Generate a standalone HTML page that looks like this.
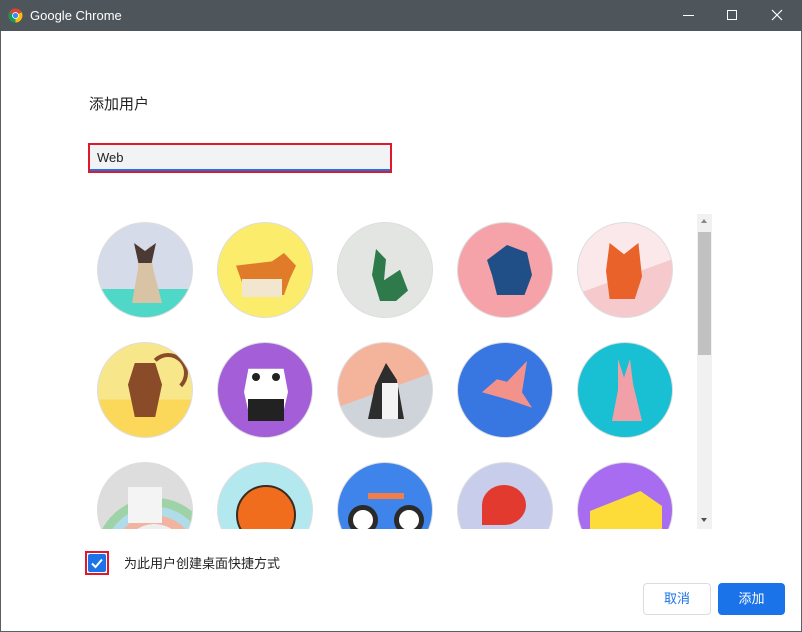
<!DOCTYPE html>
<html><head><meta charset="utf-8"><style>
*{margin:0;padding:0;box-sizing:border-box}
body{width:802px;height:632px;overflow:hidden;background:#fff;font-family:"Liberation Sans","Noto Sans CJK SC",sans-serif;position:relative}
.win{position:absolute;left:0;top:0;width:802px;height:632px;border:1px solid #5a6166;border-top:none}
.tb{position:absolute;left:0;top:0;width:802px;height:31px;background:#4e565b;color:#fff;font-size:13px}
.av{position:absolute;width:96px;height:96px;border-radius:50%;overflow:hidden;border:1px solid #ddd}
.clip{position:absolute;left:90px;top:212px;width:606px;height:317px;overflow:hidden}
</style></head><body>
<div class="win"></div>
<div class="tb">
<svg style="position:absolute;left:8px;top:8px" width="15" height="15" viewBox="0 0 16 16"><circle cx="8" cy="8" r="7.5" fill="#db4437"/><path d="M8 8 L14.5 4.5 A7.5 7.5 0 0 1 8 15.5Z" fill="#f4c20d"/><path d="M8 8 L8 15.5 A7.5 7.5 0 0 1 1.5 4.5Z" fill="#0f9d58"/><circle cx="8" cy="8" r="3.6" fill="#fff"/><circle cx="8" cy="8" r="2.8" fill="#4285f4"/></svg>
<span style="position:absolute;left:30px;top:8px">Google Chrome</span>
<div style="position:absolute;left:683px;top:15px;width:11px;height:1px;background:#fff"></div>
<div style="position:absolute;left:727px;top:10px;width:10px;height:10px;border:1px solid #fff"></div>
<svg style="position:absolute;left:771px;top:9px" width="12" height="12"><path d="M1 1L11 11M11 1L1 11" stroke="#fff" stroke-width="1.2"/></svg>
</div>
<div style="position:absolute;left:89px;top:93px;font-size:15px;color:#222">添加用户</div>
<div style="position:absolute;left:88px;top:143px;width:304px;height:30px;border:2px solid #e0182a;background:#f1f3f4"><div style="position:absolute;left:0;right:0;bottom:0;height:2px;background:#1a73e8"></div><span style="position:absolute;left:7px;top:5px;font-size:13px;color:#222">Web</span></div>

<div class="clip">
<div class="av" style="left:7px;top:10px;background:linear-gradient(#d6dbe9 70%,#4fd8c8 70%)"><div style="position:absolute;left:34px;top:22px;width:30px;height:58px;background:#d9c3a5;clip-path:polygon(20% 0,40% 20%,60% 0,70% 40%,100% 100%,0 100%,20% 40%)"></div><div style="position:absolute;left:36px;top:20px;width:22px;height:20px;background:#4a3a33;clip-path:polygon(0 0,50% 40%,100% 0,80% 100%,20% 100%)"></div></div>
<div class="av" style="left:127px;top:10px;background:#fbec6c"><div style="position:absolute;left:18px;top:30px;width:60px;height:42px;background:#e07b2a;clip-path:polygon(0 30%,60% 20%,80% 0,100% 30%,90% 60%,80% 100%,20% 100%,10% 70%)"></div><div style="position:absolute;left:24px;top:56px;width:40px;height:18px;background:#f3e6cf"></div></div>
<div class="av" style="left:247px;top:10px;background:#e3e5e3"><div style="position:absolute;left:30px;top:26px;width:40px;height:52px;background:#2f7a4a;clip-path:polygon(20% 0,45% 20%,40% 60%,80% 40%,100% 80%,70% 100%,30% 100%,10% 50%)"></div></div>
<div class="av" style="left:367px;top:10px;background:#f5a3a8"><div style="position:absolute;left:24px;top:22px;width:50px;height:50px;background:#1f4f86;clip-path:polygon(10% 30%,50% 0,90% 15%,100% 60%,85% 100%,30% 100%,20% 60%)"></div></div>
<div class="av" style="left:487px;top:10px;background:linear-gradient(160deg,#fbe8ea 55%,#f6c9cc 55%)"><div style="position:absolute;left:28px;top:20px;width:36px;height:56px;background:#e8622a;clip-path:polygon(10% 0,50% 20%,90% 0,100% 60%,80% 100%,10% 100%,0 50%)"></div></div>
<div class="av" style="left:7px;top:130px;background:linear-gradient(#f8e68a 60%,#fbd85a 60%)"><div style="position:absolute;left:30px;top:20px;width:34px;height:54px;background:#8a4b28;clip-path:polygon(20% 0,80% 0,100% 40%,80% 100%,20% 100%,0 40%)"></div><div style="position:absolute;left:50px;top:10px;width:40px;height:40px;border:4px solid #8a4b28;border-radius:50%;border-left-color:transparent;border-bottom-color:transparent"></div></div>
<div class="av" style="left:127px;top:130px;background:#a35ed8"><div style="position:absolute;left:26px;top:20px;width:44px;height:58px;background:#fff;clip-path:polygon(10% 10%,90% 10%,100% 50%,85% 100%,15% 100%,0 50%)"></div><div style="position:absolute;left:30px;top:56px;width:36px;height:22px;background:#222"></div><div style="position:absolute;left:34px;top:30px;width:8px;height:8px;background:#222;border-radius:50%"></div><div style="position:absolute;left:54px;top:30px;width:8px;height:8px;background:#222;border-radius:50%"></div></div>
<div class="av" style="left:247px;top:130px;background:linear-gradient(160deg,#f4b49c 50%,#cfd3da 50%)"><div style="position:absolute;left:30px;top:20px;width:36px;height:56px;background:#2d2d2d;clip-path:polygon(50% 0,80% 30%,100% 100%,0 100%,20% 40%)"></div><div style="position:absolute;left:44px;top:40px;width:16px;height:36px;background:#f3f3f3"></div></div>
<div class="av" style="left:367px;top:130px;background:#3876e2"><div style="position:absolute;left:24px;top:18px;width:50px;height:52px;background:#f3928a;clip-path:polygon(50% 40%,90% 0,80% 60%,100% 90%,55% 75%,0 60%,30% 35%)"></div></div>
<div class="av" style="left:487px;top:130px;background:#19bfd3"><div style="position:absolute;left:34px;top:16px;width:30px;height:62px;background:#f2a0a8;clip-path:polygon(20% 0,40% 30%,60% 0,70% 40%,100% 100%,0 100%,20% 50%)"></div></div>
<div class="av" style="left:7px;top:250px;background:radial-gradient(circle at 60% 100%,#eee 30%,#f2b4a0 30%,#f2b4a0 38%,#b0dbe8 38%,#b0dbe8 46%,#9ed3a8 46%,#9ed3a8 54%,#ddd 54%)"><div style="position:absolute;left:30px;top:24px;width:34px;height:36px;background:#f4f4f4"></div></div>
<div class="av" style="left:127px;top:250px;background:#b4e8ef"><div style="position:absolute;left:18px;top:22px;width:60px;height:60px;border-radius:50%;background:#f06d1e;border:2px solid #3a2a22"></div></div>
<div class="av" style="left:247px;top:250px;background:#3f84ea"><div style="position:absolute;left:10px;top:42px;width:30px;height:30px;border-radius:50%;border:5px solid #2a2a2a;background:#fff"></div><div style="position:absolute;left:56px;top:42px;width:30px;height:30px;border-radius:50%;border:5px solid #2a2a2a;background:#fff"></div><div style="position:absolute;left:30px;top:30px;width:36px;height:6px;background:#f07d4a"></div></div>
<div class="av" style="left:367px;top:250px;background:#c8cdeb"><div style="position:absolute;left:24px;top:22px;width:44px;height:40px;background:#e23a2e;border-radius:50% 50% 50% 0"></div></div>
<div class="av" style="left:487px;top:250px;background:#a76cf0"><div style="position:absolute;left:12px;top:28px;width:72px;height:50px;background:#fddc3a;clip-path:polygon(0 40%,70% 0,100% 30%,100% 100%,0 100%)"></div></div>
</div>
<div style="position:absolute;left:697px;top:214px;width:15px;height:315px;background:#f1f1f1"></div>
<div style="position:absolute;left:698px;top:232px;width:13px;height:123px;background:#c1c1c1"></div>
<div style="position:absolute;left:701px;top:219px;width:0;height:0;border:3.5px solid transparent;border-bottom:4px solid #888;border-top:none"></div>
<div style="position:absolute;left:701px;top:518px;width:0;height:0;border:3.5px solid transparent;border-top:4px solid #505050;border-bottom:none"></div>

<div style="position:absolute;left:85px;top:551px;width:24px;height:24px;border:2px solid #e0182a"></div>
<div style="position:absolute;left:88px;top:554px;width:18px;height:18px;background:#1a73e8;border-radius:2px"><svg width="18" height="18"><path d="M4 9.5L7.5 13L14 5.5" stroke="#fff" stroke-width="2" fill="none"/></svg></div>
<div style="position:absolute;left:124px;top:553px;font-size:13px;color:#222">为此用户创建桌面快捷方式</div>
<div style="position:absolute;left:643px;top:583px;width:68px;height:32px;border:1px solid #dadce0;border-radius:4px;color:#1a73e8;font-size:13px;text-align:center;line-height:30px">取消</div>
<div style="position:absolute;left:718px;top:583px;width:67px;height:32px;background:#1a73e8;border-radius:4px;color:#fff;font-size:13px;text-align:center;line-height:32px">添加</div>
</body></html>
